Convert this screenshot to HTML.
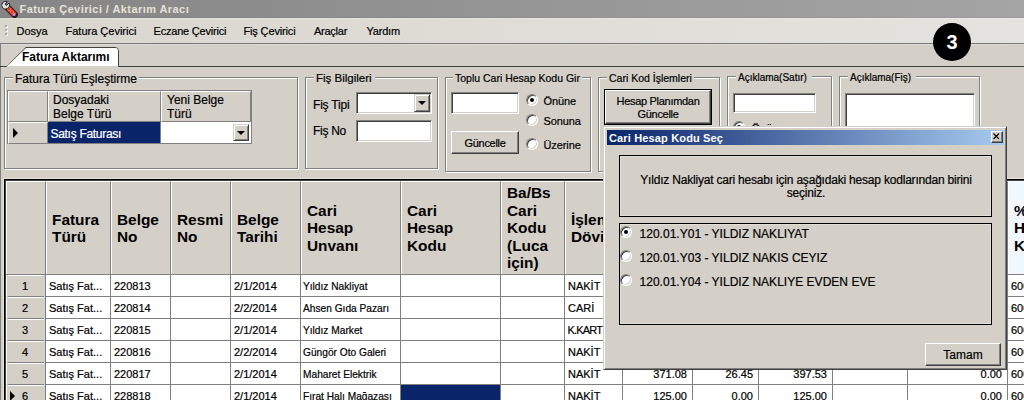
<!DOCTYPE html><html><head><meta charset="utf-8"><style>

*{box-sizing:border-box;margin:0;padding:0}
html,body{width:1024px;height:400px;overflow:hidden;background:#d4d0c8;font-family:"Liberation Sans",sans-serif;color:#000;-webkit-text-stroke:0.2px currentColor}
.ab{position:absolute}
.t{position:absolute;white-space:nowrap;line-height:1}
.hl{position:absolute;height:1px}
.vl{position:absolute;width:1px}
.gb{position:absolute;border-top:1px solid #808080;border-left:1px solid #808080;border-right:1px solid #fff;border-bottom:1px solid #fff;box-shadow:inset 1px 1px 0 #fff, 1px 1px 0 #808080}
.gt{position:absolute;background:#d4d0c8;padding:0 2px;white-space:nowrap;line-height:1}
.tb{position:absolute;background:#fff;border-top:1px solid #808080;border-left:1px solid #808080;border-right:1px solid #fff;border-bottom:1px solid #fff;box-shadow:inset 1px 1px 0 #404040, inset -1px -1px 0 #d4d0c8}
.btn{position:absolute;background:#d4d0c8;border-top:1px solid #fff;border-left:1px solid #fff;border-right:1px solid #404040;border-bottom:1px solid #404040;box-shadow:inset -1px -1px 0 #808080;text-align:center;white-space:nowrap}
.ddb{position:absolute;background:#d4d0c8;border-top:1px solid #d4d0c8;border-left:1px solid #d4d0c8;border-right:1px solid #404040;border-bottom:1px solid #404040;box-shadow:inset 1px 1px 0 #fff, inset -1px -1px 0 #808080}
.arr{position:absolute;width:0;height:0;border-left:4px solid transparent;border-right:4px solid transparent;border-top:4px solid #000}
.radio{position:absolute;width:12px;height:12px;border-radius:50%;background:#fff;border:1px solid;border-color:#808080 #fff #fff #808080;box-shadow:inset 1px 1px 0 #404040, inset -1px -1px 0 #d4d0c8}

</style></head><body>
<div class="ab" style="left:0;top:0;width:1024px;height:18px;background:linear-gradient(to right,#858585,#a5a5a5)"></div>
<div class="hl" style="left:0;top:17px;width:1024px;background:rgba(0,0,0,0.06)"></div>
<svg class="ab" style="left:0px;top:0px" width="18" height="18" viewBox="0 0 18 18">
<line x1="8.2" y1="8.2" x2="14.6" y2="14.6" stroke="#2a1a1a" stroke-width="6.6" stroke-linecap="round"/>
<line x1="8.2" y1="8.2" x2="14.6" y2="14.6" stroke="#e8321c" stroke-width="4.8" stroke-linecap="butt"/>
<path d="M8.6 7.2 L14.6 13.2 M7.2 8.6 L13.2 14.6" stroke="#ffe0d8" stroke-width="0.9" stroke-dasharray="1 1"/>
<circle cx="14.2" cy="14.6" r="1.5" fill="#b888d0"/>
<path d="M2.6 3 C1.4 4.6 1.7 7 3.4 8.3 C4.7 9.3 6.5 9.2 7.7 8.3 L8.8 7.2 C9.8 6 9.9 4.4 9 3.1 L6.8 5.3 L5.1 4.5 L7.2 1.6 C5.6 0.8 3.7 1.5 2.6 3 Z" fill="#dcdcdc" stroke="#262626" stroke-width="1" stroke-linejoin="round"/>
<path d="M3.3 4.6 C2.9 6 3.5 7.3 4.8 7.8" stroke="#ffffff" stroke-width="1" fill="none"/>
</svg>
<div class="t" style="left:19.5px;top:3.9px;font-size:11px;font-weight:bold;-webkit-text-stroke:0;letter-spacing:0.43px;color:#e6e2d8">Fatura Çevirici / Aktarım Aracı</div>
<div class="ab" style="left:0;top:18px;width:1024px;height:25px;background:linear-gradient(to right,#d9d6ce,#e5e3df)"></div>
<div class="hl" style="left:0;top:18px;width:1024px;background:rgba(255,255,255,0.25)"></div>
<div class="hl" style="left:0;top:43px;width:1024px;background:#787878"></div>
<div class="hl" style="left:0;top:44px;width:1024px;background:#dedbd5"></div>
<div class="ab" style="left:5px;top:25px;width:2px;height:2px;background:#a8a8a8;box-shadow:1px 1px 0 #fff"></div>
<div class="ab" style="left:5px;top:29px;width:2px;height:2px;background:#a8a8a8;box-shadow:1px 1px 0 #fff"></div>
<div class="ab" style="left:5px;top:33px;width:2px;height:2px;background:#a8a8a8;box-shadow:1px 1px 0 #fff"></div>
<div class="t" style="left:16.5px;top:26px;font-size:11px;letter-spacing:0px">Dosya</div>
<div class="t" style="left:65.5px;top:26px;font-size:11px;letter-spacing:0px">Fatura Çevirici</div>
<div class="t" style="left:153.5px;top:26px;font-size:11px;letter-spacing:-0.2px">Eczane Çevirici</div>
<div class="t" style="left:243.5px;top:26px;font-size:11px;letter-spacing:-0.15px">Fiş Çevirici</div>
<div class="t" style="left:314px;top:26px;font-size:11px;letter-spacing:-0.25px">Araçlar</div>
<div class="t" style="left:366.5px;top:26px;font-size:11px;letter-spacing:-0.2px">Yardım</div>
<div class="vl" style="left:0;top:44px;height:356px;background:#808080"></div>
<svg class="ab" style="left:0;top:44px" width="1024" height="24" viewBox="0 0 1024 24">
<path d="M0 22.5 H6.5 L26 3.5 H115 Q118.5 3.5 118.5 7 V22.5 H1024" fill="none" stroke="#404040" stroke-width="1"/>
<path d="M7 22 L26.5 4 H115 Q118 4 118 7 V22 Z" fill="#fff"/>
</svg>
<div class="t" style="left:22px;top:51px;font-size:12px;font-weight:bold;-webkit-text-stroke:0">Fatura Aktarımı</div>
<div class="ab" style="left:4px;top:77px;width:294px;height:92px;border:1px solid #808080"></div>
<div class="ab" style="left:5px;top:78px;width:294px;height:92px;border:1px solid #fff"></div>
<div class="ab" style="left:4px;top:77px;width:294px;height:92px;border-right:1px solid #808080;border-bottom:1px solid #808080"></div>
<div class="gt" style="left:13px;top:73px;font-size:12px;padding-right:2px">Fatura Türü Eşleştirme</div>
<div class="ab" style="left:305px;top:77px;width:133px;height:92px;border:1px solid #808080"></div>
<div class="ab" style="left:306px;top:78px;width:133px;height:92px;border:1px solid #fff"></div>
<div class="ab" style="left:305px;top:77px;width:133px;height:92px;border-right:1px solid #808080;border-bottom:1px solid #808080"></div>
<div class="gt" style="left:314px;top:73px;font-size:11.5px;padding-right:3px">Fiş Bilgileri</div>
<div class="ab" style="left:445px;top:77px;width:146px;height:95px;border:1px solid #808080"></div>
<div class="ab" style="left:446px;top:78px;width:146px;height:95px;border:1px solid #fff"></div>
<div class="ab" style="left:445px;top:77px;width:146px;height:95px;border-right:1px solid #808080;border-bottom:1px solid #808080"></div>
<div class="gt" style="left:453px;top:73px;font-size:10.5px;padding-right:2px">Toplu Cari Hesap Kodu Gir</div>
<div class="ab" style="left:598px;top:77px;width:122px;height:95px;border:1px solid #808080"></div>
<div class="ab" style="left:599px;top:78px;width:122px;height:95px;border:1px solid #fff"></div>
<div class="ab" style="left:598px;top:77px;width:122px;height:95px;border-right:1px solid #808080;border-bottom:1px solid #808080"></div>
<div class="gt" style="left:607px;top:73px;font-size:10.5px;padding-right:2px">Cari Kod İşlemleri</div>
<div class="ab" style="left:727px;top:76px;width:105px;height:96px;border:1px solid #808080"></div>
<div class="ab" style="left:728px;top:77px;width:105px;height:96px;border:1px solid #fff"></div>
<div class="ab" style="left:727px;top:76px;width:105px;height:96px;border-right:1px solid #808080;border-bottom:1px solid #808080"></div>
<div class="gt" style="left:736px;top:73px;font-size:10px;padding-right:5px">Açıklama(Satır)</div>
<div class="ab" style="left:839px;top:76px;width:141px;height:96px;border:1px solid #808080"></div>
<div class="ab" style="left:840px;top:77px;width:141px;height:96px;border:1px solid #fff"></div>
<div class="ab" style="left:839px;top:76px;width:141px;height:96px;border-right:1px solid #808080;border-bottom:1px solid #808080"></div>
<div class="gt" style="left:848px;top:73px;font-size:10px;padding-right:5px">Açıklama(Fiş)</div>
<div class="ab" style="left:7px;top:90px;width:245px;height:54px;border:1px solid #808080;background:#d4d0c8"></div>
<div class="ab" style="left:8px;top:91px;width:40px;height:31px;border-top:1px solid #fff;border-left:1px solid #fff;border-right:1px solid #808080;border-bottom:1px solid #808080"></div>
<div class="ab" style="left:48px;top:91px;width:113px;height:31px;border-top:1px solid #fff;border-left:1px solid #fff;border-right:1px solid #808080;border-bottom:1px solid #808080"></div>
<div class="ab" style="left:161px;top:91px;width:90px;height:31px;border-top:1px solid #fff;border-left:1px solid #fff;border-right:1px solid #808080;border-bottom:1px solid #808080"></div>
<div class="t" style="left:53px;top:94px;font-size:12px;line-height:13.6px">Dosyadaki<br>Belge Türü</div>
<div class="t" style="left:167px;top:94px;font-size:12px;line-height:13.6px">Yeni Belge<br>Türü</div>
<div class="ab" style="left:8px;top:122px;width:40px;height:22px;border-top:1px solid #fff;border-left:1px solid #fff;border-right:1px solid #808080;border-bottom:1px solid #808080"></div>
<div class="ab" style="left:13px;top:128px;width:0;height:0;border-top:5px solid transparent;border-bottom:5px solid transparent;border-left:5px solid #000"></div>
<div class="ab" style="left:48px;top:122px;width:112px;height:21px;background:#0a246a"></div>
<div class="t" style="left:50.5px;top:128px;font-size:12px;letter-spacing:-0.3px;color:#fff">Satış Faturası</div>
<div class="ab" style="left:160px;top:122px;width:91px;height:21px;background:#fff;border-left:1px solid #808080"></div>
<div class="ddb" style="left:233px;top:124px;width:16px;height:17px"></div>
<div class="arr" style="left:237px;top:131px"></div>
<div class="t" style="left:313px;top:99px;font-size:12px;letter-spacing:-0.2px">Fiş Tipi</div>
<div class="t" style="left:313px;top:125px;font-size:12px;letter-spacing:-0.3px">Fiş No</div>
<div class="tb" style="left:356px;top:92px;width:76px;height:22px"></div>
<div class="ddb" style="left:414px;top:94px;width:16px;height:18px"></div>
<div class="arr" style="left:418px;top:101px"></div>
<div class="tb" style="left:356px;top:120px;width:76px;height:22px"></div>
<div class="tb" style="left:451px;top:92px;width:68px;height:22px"></div>
<div class="btn" style="left:451px;top:131px;width:68px;height:23px;font-size:11px;line-height:23px;letter-spacing:-0.3px">Güncelle</div>
<div class="radio" style="left:526px;top:94px"></div>
<div class="ab" style="left:530px;top:98px;width:4px;height:4px;border-radius:50%;background:#000"></div>
<div class="t" style="left:543.5px;top:96px;font-size:11px;letter-spacing:-0.1px">Önüne</div>
<div class="radio" style="left:526px;top:114px"></div>
<div class="t" style="left:543.5px;top:116px;font-size:11px;letter-spacing:-0.1px">Sonuna</div>
<div class="radio" style="left:526px;top:138px"></div>
<div class="t" style="left:543.5px;top:140px;font-size:11px;letter-spacing:-0.1px">Üzerine</div>
<div class="ab" style="left:604px;top:89px;width:108px;height:36px;border:1px solid #000"></div>
<div class="btn" style="left:605px;top:90px;width:106px;height:34px;font-size:11px;line-height:13px;padding-top:3.5px;letter-spacing:-0.3px">Hesap Planımdan<br>Güncelle</div>
<div class="tb" style="left:733px;top:93px;width:83px;height:20px"></div>
<div class="radio" style="left:733px;top:121px"></div>
<div class="ab" style="left:737px;top:125px;width:4px;height:4px;border-radius:50%;background:#000"></div>
<div class="t" style="left:751.5px;top:123px;font-size:11px">Önüne</div>
<div class="tb" style="left:845px;top:93px;width:130px;height:60px"></div>
<div class="hl" style="left:3px;top:178px;width:1021px;background:#e4e1da"></div>
<div class="hl" style="left:4px;top:179px;width:1020px;background:#000"></div>
<div class="hl" style="left:5px;top:180px;width:1019px;background:#404040"></div>
<div class="vl" style="left:3px;top:178px;height:222px;background:#e4e1da"></div>
<div class="vl" style="left:4px;top:179px;height:221px;background:#000"></div>
<div class="vl" style="left:5px;top:180px;height:220px;background:#404040"></div>
<div class="ab" style="left:6px;top:181px;width:40px;height:93px;background:#d4d0c8;border-top:1px solid #fff;border-left:1px solid #fff;border-right:1px solid #808080"></div>
<div class="ab" style="left:46px;top:181px;width:65px;height:93px;background:#d4d0c8;border-top:1px solid #fff;border-left:1px solid #fff;border-right:1px solid #808080"></div>
<div class="ab" style="left:111px;top:181px;width:60px;height:93px;background:#d4d0c8;border-top:1px solid #fff;border-left:1px solid #fff;border-right:1px solid #808080"></div>
<div class="ab" style="left:171px;top:181px;width:60px;height:93px;background:#d4d0c8;border-top:1px solid #fff;border-left:1px solid #fff;border-right:1px solid #808080"></div>
<div class="ab" style="left:231px;top:181px;width:70px;height:93px;background:#d4d0c8;border-top:1px solid #fff;border-left:1px solid #fff;border-right:1px solid #808080"></div>
<div class="ab" style="left:301px;top:181px;width:100px;height:93px;background:#d4d0c8;border-top:1px solid #fff;border-left:1px solid #fff;border-right:1px solid #808080"></div>
<div class="ab" style="left:401px;top:181px;width:100px;height:93px;background:#d4d0c8;border-top:1px solid #fff;border-left:1px solid #fff;border-right:1px solid #808080"></div>
<div class="ab" style="left:501px;top:181px;width:64px;height:93px;background:#d4d0c8;border-top:1px solid #fff;border-left:1px solid #fff;border-right:1px solid #808080"></div>
<div class="ab" style="left:565px;top:181px;width:58px;height:93px;background:#d4d0c8;border-top:1px solid #fff;border-left:1px solid #fff;border-right:1px solid #808080"></div>
<div class="ab" style="left:623px;top:181px;width:70px;height:93px;background:#d4d0c8;border-top:1px solid #fff;border-left:1px solid #fff;border-right:1px solid #808080"></div>
<div class="ab" style="left:693px;top:181px;width:66px;height:93px;background:#d4d0c8;border-top:1px solid #fff;border-left:1px solid #fff;border-right:1px solid #808080"></div>
<div class="ab" style="left:759px;top:181px;width:74px;height:93px;background:#d4d0c8;border-top:1px solid #fff;border-left:1px solid #fff;border-right:1px solid #808080"></div>
<div class="ab" style="left:833px;top:181px;width:75px;height:93px;background:#d4d0c8;border-top:1px solid #fff;border-left:1px solid #fff;border-right:1px solid #808080"></div>
<div class="ab" style="left:908px;top:181px;width:100px;height:93px;background:#d4d0c8;border-top:1px solid #fff;border-left:1px solid #fff;border-right:1px solid #808080"></div>
<div class="ab" style="left:1008px;top:181px;width:93px;height:93px;background:#f0f7ff;border-top:1px solid #fff;border-left:1px solid #fff;border-right:1px solid #808080"></div>
<div class="hl" style="left:6px;top:274px;width:1018px;background:#808080"></div>
<div class="ab" style="left:52px;top:210.5px;font-size:15.4px;font-weight:bold;-webkit-text-stroke:0;line-height:17.5px;white-space:nowrap">Fatura<br>Türü</div>
<div class="ab" style="left:117px;top:210.5px;font-size:15.4px;font-weight:bold;-webkit-text-stroke:0;line-height:17.5px;white-space:nowrap">Belge<br>No</div>
<div class="ab" style="left:177px;top:210.5px;font-size:15.4px;font-weight:bold;-webkit-text-stroke:0;line-height:17.5px;white-space:nowrap">Resmi<br>No</div>
<div class="ab" style="left:237px;top:210.5px;font-size:15.4px;font-weight:bold;-webkit-text-stroke:0;line-height:17.5px;white-space:nowrap">Belge<br>Tarihi</div>
<div class="ab" style="left:307px;top:201.8px;font-size:15.4px;font-weight:bold;-webkit-text-stroke:0;line-height:17.5px;white-space:nowrap">Cari<br>Hesap<br>Unvanı</div>
<div class="ab" style="left:407px;top:201.8px;font-size:15.4px;font-weight:bold;-webkit-text-stroke:0;line-height:17.5px;white-space:nowrap">Cari<br>Hesap<br>Kodu</div>
<div class="ab" style="left:507px;top:184.2px;font-size:15.4px;font-weight:bold;-webkit-text-stroke:0;line-height:17.5px;white-space:nowrap">Ba/Bs<br>Cari<br>Kodu<br>(Luca<br>için)</div>
<div class="ab" style="left:571px;top:210.5px;font-size:15.4px;font-weight:bold;-webkit-text-stroke:0;line-height:17.5px;white-space:nowrap">İşlem<br>Dövi</div>
<div class="ab" style="left:1014px;top:201.8px;font-size:15.4px;font-weight:bold;-webkit-text-stroke:0;line-height:17.5px;white-space:nowrap">%<br>H<br>K</div>
<div class="ab" style="left:6px;top:275px;width:39px;height:21px;background:#d4d0c8;border-left:1px solid #fff"></div>
<div class="hl" style="left:8px;top:275px;width:36px;background:#fff"></div>
<div class="t" style="left:5px;width:40px;text-align:center;top:281px;font-size:11px">1</div>
<div class="ab" style="left:45px;top:275px;width:979px;height:21px;background:#fff"></div>
<div class="t" style="left:49px;top:281px;font-size:11px">Satış Fat...</div>
<div class="t" style="left:114px;top:281px;font-size:11px">220813</div>
<div class="t" style="left:234px;top:281px;font-size:11px">2/1/2014</div>
<div class="t" style="left:303px;top:281px;font-size:11px;transform:scaleX(0.925);transform-origin:0 0">Yıldız Nakliyat</div>
<div class="t" style="left:568px;top:281px;font-size:11px">NAKİT</div>
<div class="t" style="left:1011px;top:281px;font-size:11px">600</div>
<div class="hl" style="left:45px;top:296px;width:979px;background:#808080"></div>
<div class="ab" style="left:6px;top:297px;width:39px;height:21px;background:#d4d0c8;border-left:1px solid #fff"></div>
<div class="hl" style="left:8px;top:297px;width:36px;background:#fff"></div>
<div class="t" style="left:5px;width:40px;text-align:center;top:303px;font-size:11px">2</div>
<div class="ab" style="left:45px;top:297px;width:979px;height:21px;background:#fff"></div>
<div class="t" style="left:49px;top:303px;font-size:11px">Satış Fat...</div>
<div class="t" style="left:114px;top:303px;font-size:11px">220814</div>
<div class="t" style="left:234px;top:303px;font-size:11px">2/2/2014</div>
<div class="t" style="left:303px;top:303px;font-size:11px;transform:scaleX(0.925);transform-origin:0 0">Ahsen Gıda Pazarı</div>
<div class="t" style="left:568px;top:303px;font-size:11px">CARİ</div>
<div class="t" style="left:1011px;top:303px;font-size:11px">600</div>
<div class="hl" style="left:45px;top:318px;width:979px;background:#808080"></div>
<div class="ab" style="left:6px;top:319px;width:39px;height:21px;background:#d4d0c8;border-left:1px solid #fff"></div>
<div class="hl" style="left:8px;top:319px;width:36px;background:#fff"></div>
<div class="t" style="left:5px;width:40px;text-align:center;top:325px;font-size:11px">3</div>
<div class="ab" style="left:45px;top:319px;width:979px;height:21px;background:#fff"></div>
<div class="t" style="left:49px;top:325px;font-size:11px">Satış Fat...</div>
<div class="t" style="left:114px;top:325px;font-size:11px">220815</div>
<div class="t" style="left:234px;top:325px;font-size:11px">2/1/2014</div>
<div class="t" style="left:303px;top:325px;font-size:11px;transform:scaleX(0.925);transform-origin:0 0">Yıldız Market</div>
<div class="t" style="left:567.5px;top:325px;font-size:11px;letter-spacing:-0.8px">K.KART</div>
<div class="t" style="left:1011px;top:325px;font-size:11px">600</div>
<div class="hl" style="left:45px;top:340px;width:979px;background:#808080"></div>
<div class="ab" style="left:6px;top:341px;width:39px;height:21px;background:#d4d0c8;border-left:1px solid #fff"></div>
<div class="hl" style="left:8px;top:341px;width:36px;background:#fff"></div>
<div class="t" style="left:5px;width:40px;text-align:center;top:347px;font-size:11px">4</div>
<div class="ab" style="left:45px;top:341px;width:979px;height:21px;background:#fff"></div>
<div class="t" style="left:49px;top:347px;font-size:11px">Satış Fat...</div>
<div class="t" style="left:114px;top:347px;font-size:11px">220816</div>
<div class="t" style="left:234px;top:347px;font-size:11px">2/2/2014</div>
<div class="t" style="left:303px;top:347px;font-size:11px;transform:scaleX(0.925);transform-origin:0 0">Güngör Oto Galeri</div>
<div class="t" style="left:568px;top:347px;font-size:11px">NAKİT</div>
<div class="t" style="left:1011px;top:347px;font-size:11px">600</div>
<div class="hl" style="left:45px;top:362px;width:979px;background:#808080"></div>
<div class="ab" style="left:6px;top:363px;width:39px;height:21px;background:#d4d0c8;border-left:1px solid #fff"></div>
<div class="hl" style="left:8px;top:363px;width:36px;background:#fff"></div>
<div class="t" style="left:5px;width:40px;text-align:center;top:369px;font-size:11px">5</div>
<div class="ab" style="left:45px;top:363px;width:979px;height:21px;background:#fff"></div>
<div class="t" style="left:49px;top:369px;font-size:11px">Satış Fat...</div>
<div class="t" style="left:114px;top:369px;font-size:11px">220817</div>
<div class="t" style="left:234px;top:369px;font-size:11px">2/1/2014</div>
<div class="t" style="left:303px;top:369px;font-size:11px;transform:scaleX(0.925);transform-origin:0 0">Maharet Elektrik</div>
<div class="t" style="left:568px;top:369px;font-size:11px">NAKİT</div>
<div class="t" style="left:622px;width:65px;text-align:right;top:369px;font-size:11px">371.08</div>
<div class="t" style="left:692px;width:61px;text-align:right;top:369px;font-size:11px">26.45</div>
<div class="t" style="left:758px;width:69px;text-align:right;top:369px;font-size:11px">397.53</div>
<div class="t" style="left:907px;width:95px;text-align:right;top:369px;font-size:11px">0.00</div>
<div class="t" style="left:1011px;top:369px;font-size:11px">600</div>
<div class="hl" style="left:45px;top:384px;width:979px;background:#808080"></div>
<div class="ab" style="left:6px;top:385px;width:39px;height:21px;background:#d4d0c8;border-left:1px solid #fff"></div>
<div class="hl" style="left:8px;top:385px;width:36px;background:#fff"></div>
<div class="t" style="left:5px;width:40px;text-align:center;top:391px;font-size:11px">6</div>
<div class="ab" style="left:10px;top:391px;width:0;height:0;border-top:5px solid transparent;border-bottom:5px solid transparent;border-left:5px solid #000"></div>
<div class="ab" style="left:45px;top:385px;width:979px;height:21px;background:#fff"></div>
<div class="t" style="left:49px;top:391px;font-size:11px">Satış Fat...</div>
<div class="t" style="left:114px;top:391px;font-size:11px">228818</div>
<div class="t" style="left:234px;top:391px;font-size:11px">2/1/2014</div>
<div class="t" style="left:303px;top:391px;font-size:11px;transform:scaleX(0.925);transform-origin:0 0">Fırat Halı Mağazası</div>
<div class="ab" style="left:401px;top:385px;width:99px;height:21px;background:#0a246a"></div>
<div class="t" style="left:568px;top:391px;font-size:11px">NAKİT</div>
<div class="t" style="left:622px;width:65px;text-align:right;top:391px;font-size:11px">125.00</div>
<div class="t" style="left:692px;width:61px;text-align:right;top:391px;font-size:11px">0.00</div>
<div class="t" style="left:758px;width:69px;text-align:right;top:391px;font-size:11px">125.00</div>
<div class="t" style="left:907px;width:95px;text-align:right;top:391px;font-size:11px">0.00</div>
<div class="t" style="left:1011px;top:391px;font-size:11px">600</div>
<div class="hl" style="left:45px;top:406px;width:979px;background:#808080"></div>
<div class="vl" style="left:45px;top:274px;height:126px;background:#808080"></div>
<div class="vl" style="left:110px;top:274px;height:126px;background:#808080"></div>
<div class="vl" style="left:170px;top:274px;height:126px;background:#808080"></div>
<div class="vl" style="left:230px;top:274px;height:126px;background:#808080"></div>
<div class="vl" style="left:300px;top:274px;height:126px;background:#808080"></div>
<div class="vl" style="left:400px;top:274px;height:126px;background:#808080"></div>
<div class="vl" style="left:500px;top:274px;height:126px;background:#808080"></div>
<div class="vl" style="left:564px;top:274px;height:126px;background:#808080"></div>
<div class="vl" style="left:622px;top:274px;height:126px;background:#808080"></div>
<div class="vl" style="left:692px;top:274px;height:126px;background:#808080"></div>
<div class="vl" style="left:758px;top:274px;height:126px;background:#808080"></div>
<div class="vl" style="left:832px;top:274px;height:126px;background:#808080"></div>
<div class="vl" style="left:907px;top:274px;height:126px;background:#808080"></div>
<div class="vl" style="left:1007px;top:274px;height:126px;background:#808080"></div>
<div class="hl" style="left:8px;top:274px;width:36px;background:#808080"></div>
<div class="hl" style="left:8px;top:296px;width:36px;background:#808080"></div>
<div class="hl" style="left:8px;top:318px;width:36px;background:#808080"></div>
<div class="hl" style="left:8px;top:340px;width:36px;background:#808080"></div>
<div class="hl" style="left:8px;top:362px;width:36px;background:#808080"></div>
<div class="hl" style="left:8px;top:384px;width:36px;background:#808080"></div>
<div class="hl" style="left:8px;top:406px;width:36px;background:#808080"></div>
<div class="ab" style="left:603px;top:126px;width:404px;height:244px;background:#d4d0c8;border-top:1px solid #d4d0c8;border-left:1px solid #d4d0c8;border-right:1px solid #404040;border-bottom:1px solid #404040;box-shadow:inset 1px 1px 0 #fff, inset -1px -1px 0 #808080"></div>
<div class="ab" style="left:607px;top:130px;width:397px;height:15px;background:linear-gradient(to right,#0a246a,#a6caf0)"></div>
<div class="t" style="left:609px;top:133px;font-size:11px;font-weight:bold;-webkit-text-stroke:0;letter-spacing:0.15px;color:#fff">Cari Hesap Kodu Seç</div>
<div class="btn" style="left:991px;top:131px;width:12px;height:12px"></div>
<svg class="ab" style="left:991px;top:131px" width="11" height="11"><path d="M2.5 2.5 L8 8 M8 2.5 L2.5 8" stroke="#000" stroke-width="1.1"/></svg>
<div class="ab" style="left:619px;top:155px;width:373px;height:62px;border:1px solid #000;box-shadow:inset 0 0 0 1px #e2dfd8"></div>
<div class="ab" style="left:619px;top:173.5px;width:374px;text-align:center;font-size:12px;line-height:13.5px;letter-spacing:-0.2px;white-space:nowrap">Yıldız Nakliyat cari hesabı için aşağıdaki hesap kodlarından birini<br>seçiniz.</div>
<div class="ab" style="left:619px;top:223px;width:373px;height:102px;border:1px solid #000;box-shadow:inset 0 0 0 1px #e2dfd8"></div>
<div class="radio" style="left:620px;top:226px"></div>
<div class="ab" style="left:624px;top:230px;width:4px;height:4px;border-radius:50%;background:#000"></div>
<div class="t" style="left:639.5px;top:228px;font-size:12px;letter-spacing:0.02px">120.01.Y01 - YILDIZ NAKLIYAT</div>
<div class="radio" style="left:620px;top:250px"></div>
<div class="t" style="left:639.5px;top:252px;font-size:12px;letter-spacing:0.02px">120.01.Y03 - YILDIZ NAKIS CEYIZ</div>
<div class="radio" style="left:620px;top:274px"></div>
<div class="t" style="left:639.5px;top:276px;font-size:12px;letter-spacing:0.02px">120.01.Y04 - YILDIZ NAKLIYE EVDEN EVE</div>
<div class="btn" style="left:925px;top:343px;width:76px;height:23px;font-size:12px;line-height:23px">Tamam</div>
<div class="ab" style="left:933px;top:23px;width:38px;height:38px;border-radius:50%;background:#000"></div>
<div class="t" style="left:933px;width:38px;text-align:center;top:32px;font-size:20px;font-weight:bold;-webkit-text-stroke:0;color:#fff">3</div>
</body></html>
